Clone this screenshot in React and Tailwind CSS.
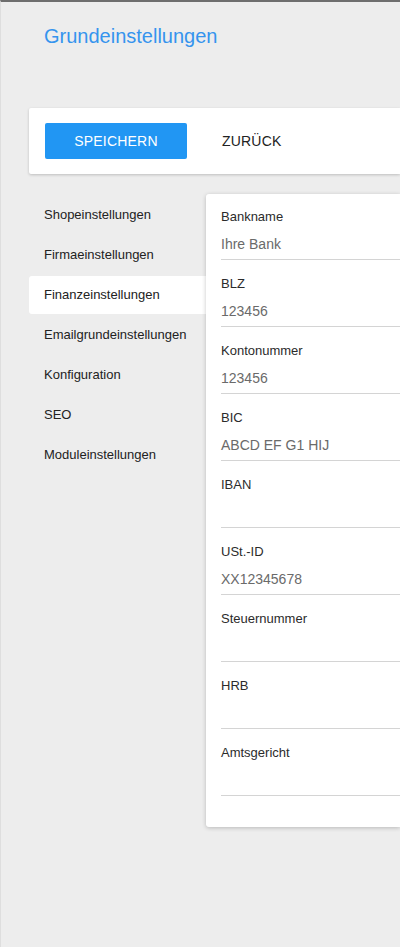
import React from 'react';

const navItems = [
    'Shopeinstellungen',
    'Firmaeinstellungen',
    'Finanzeinstellungen',
    'Emailgrundeinstellungen',
    'Konfiguration',
    'SEO',
    'Moduleinstellungen',
];

const fields = [
    { label: 'Bankname', value: 'Ihre Bank' },
    { label: 'BLZ', value: '123456' },
    { label: 'Kontonummer', value: '123456' },
    { label: 'BIC', value: 'ABCD EF G1 HIJ' },
    { label: 'IBAN', value: '' },
    { label: 'USt.-ID', value: 'XX12345678' },
    { label: 'Steuernummer', value: '' },
    { label: 'HRB', value: '' },
    { label: 'Amtsgericht', value: '' },
];

const App = () => {
    return (
        <div
            className="min-h-[947px] w-[400px] overflow-hidden bg-[#ededed] border-t-2 border-t-[#6e6e6e] border-l border-l-[#dedede]"
            style={{ fontFamily: '"Liberation Sans", Arial, sans-serif' }}
        >
            <div className="pl-[43px] pt-[22px] h-[106px]">
                <h1 className="text-[20px] leading-[24px] text-[#3594ee]">Grundeinstellungen</h1>
            </div>

            <div className="ml-[28px] h-[66px] bg-white rounded-l-[2px] shadow-[0_1px_3px_rgba(0,0,0,0.2)] flex items-center pl-[16px]">
                <button className="w-[142px] h-[36px] rounded-[2px] bg-[#2196f3] text-white text-[14px] font-medium tracking-[0.2px]">
                    SPEICHERN
                </button>
                <button className="ml-[35px] text-[14px] text-[#222] tracking-[0.2px]">ZURÜCK</button>
            </div>

            <div className="flex mt-[20px]">
                <nav className="ml-[28px] w-[177px] shrink-0 flex flex-col gap-[2px] pt-[2px]">
                    {navItems.map((item, index) => (
                        <div
                            key={item}
                            className={`h-[38px] flex items-center pl-[15px] text-[13px] text-[#222] rounded-l-[3px] ${
                                index === 2 ? 'bg-white' : ''
                            }`}
                        >
                            {item}
                        </div>
                    ))}
                </nav>

                <div className="relative flex-1 bg-white rounded-l-[3px] shadow-[0_1px_4px_rgba(0,0,0,0.22)] pl-[15px] pb-[32px] h-[633px]">
                    {fields.map((field, index) => (
                        <div
                            key={field.label}
                            className={`${index === 0 ? 'pt-[15px]' : 'pt-[16px]'} border-b border-[#d4d4d4]`}
                        >
                            <div className="h-[16px] leading-[16px] text-[13px] text-[#2b2b2b]">{field.label}</div>
                            <div className="mt-[9px] h-[20px] leading-[20px] text-[14px] text-[#6a6a6a] mb-[5px]">
                                {field.value}
                            </div>
                        </div>
                    ))}
                </div>
            </div>
        </div>
    );
};

export default App;
